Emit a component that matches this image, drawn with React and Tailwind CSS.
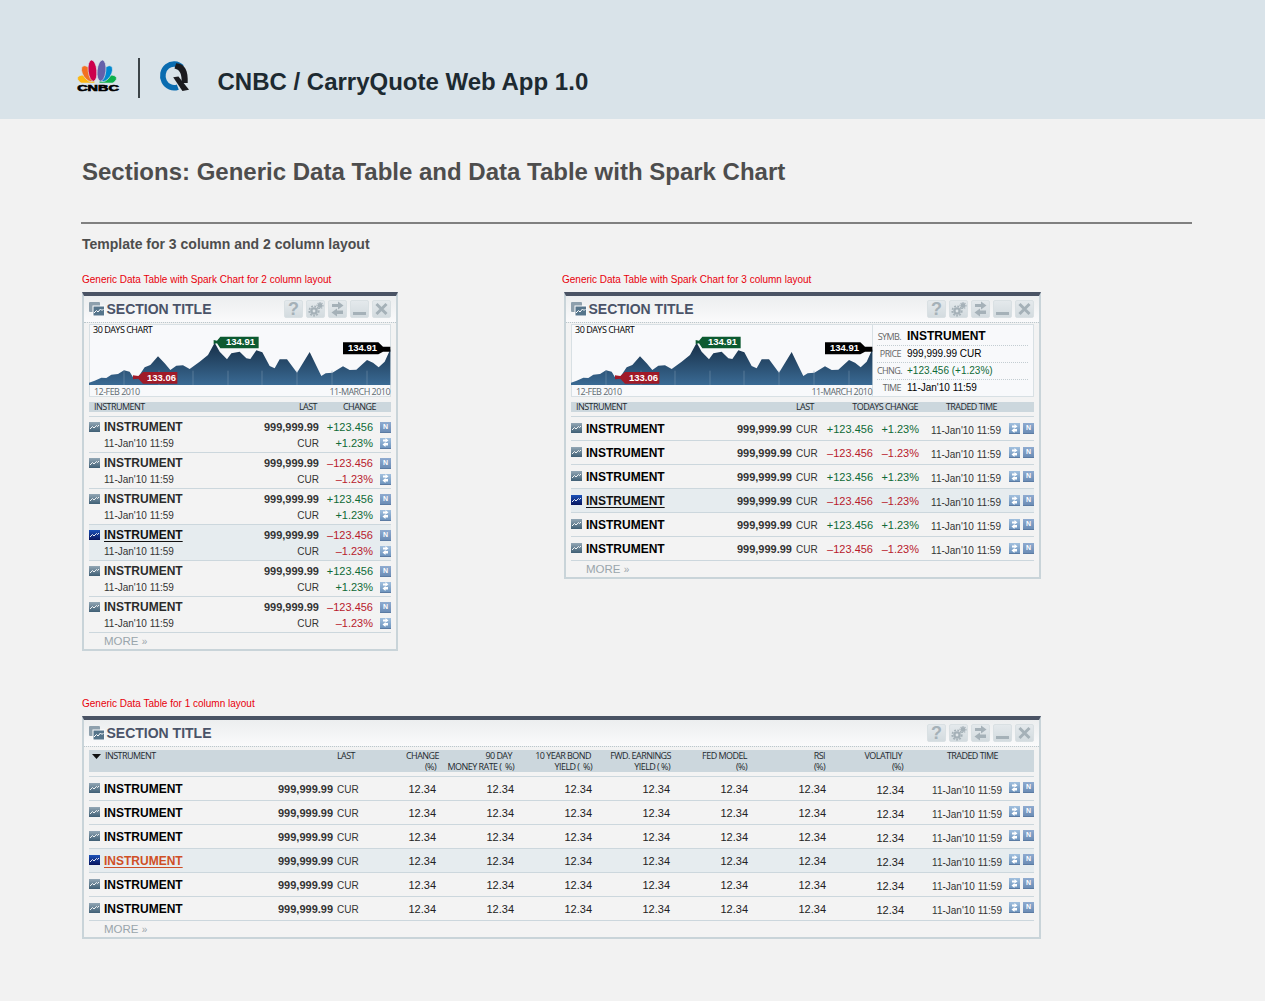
import React from 'react'

const points =
  '28,278 45,272 65,263 80,264 95,254 115,252 133,241 150,245 160,262 175,262 195,232 212,225 235,199 255,220 272,240 290,227 310,226 330,237 360,215 385,195 405,158 420,185 442,208 455,190 480,185 500,205 512,207 530,181 548,187 570,228 585,235 600,208 622,208 652,248 690,186 725,258 738,250 758,248 790,229 810,240 830,239 862,210 880,218 897,232 915,215 932,178'

function PeacockLogo() {
  return (
    <div className="flex flex-col items-center w-[41px] h-[33px]">
      <svg width="41" height="24" viewBox="53 60 122 72">
        <defs>
          <clipPath id="feathers">
            <rect x="50" y="55" width="130" height="73" />
          </clipPath>
        </defs>
        <g clipPath="url(#feathers)" stroke="#d9e3e9" strokeWidth="2">
          <ellipse cx="80" cy="121" rx="14" ry="27" fill="#fcb711" transform="rotate(-72 80 121)" />
          <ellipse cx="145" cy="121" rx="14" ry="27" fill="#0db14b" transform="rotate(72 145 121)" />
          <ellipse cx="85" cy="101" rx="14.5" ry="27" fill="#f37021" transform="rotate(-33 85 101)" />
          <ellipse cx="140" cy="101" rx="14.5" ry="27" fill="#0089d0" transform="rotate(33 140 101)" />
          <ellipse cx="99" cy="92" rx="13" ry="32" fill="#cc004c" transform="rotate(-6 99 92)" />
          <ellipse cx="126" cy="92" rx="13" ry="32" fill="#6460aa" transform="rotate(6 126 92)" />
        </g>
      </svg>
      <span className="text-[9px] leading-[9px] font-bold text-black scale-x-[1.6] [-webkit-text-stroke:0.6px_black]">
        CNBC
      </span>
    </div>
  )
}

function QLogo() {
  return (
    <svg width="33" height="33" viewBox="290 60 100 100">
      <path d="M362 82 A34 36 0 1 0 350 142" fill="none" stroke="#0a6cb0" strokeWidth="17" />
      <path d="M345 70 C372 72 382 92 380 130 L362 130 C362 104 358 90 340 86 Z" fill="#1b1b1f" />
      <path d="M336 112 L352 110 L384 150 L364 154 Z" fill="#1b1b1f" />
    </svg>
  )
}

function SectionIcon() {
  return (
    <svg width="16" height="15" viewBox="0 0 16 15" className="shrink-0">
      <rect x="0" y="0" width="11" height="10" rx="1" fill="#8ea0ad" />
      <rect x="3.5" y="3.5" width="12" height="10.5" fill="#fff" />
      <rect x="4.5" y="4.5" width="10.5" height="9" fill="#56758b" />
      <path d="M5 11 L7.5 8.5 L9 10 L11.5 7 L13 8.5 L14.5 7" fill="none" stroke="#fff" strokeWidth="1" />
    </svg>
  )
}

function HeadButton({ children }) {
  return (
    <div className="w-[19px] h-[18px] rounded-[2px] border border-[#d9e0e3] bg-linear-to-b from-[#e4e9ec] to-[#d3dbdf] flex items-center justify-center text-[#a5b1b8]">
      {children}
    </div>
  )
}

function PanelHead() {
  return (
    <div className="h-[27px] border-b border-dotted border-[#bcc7cc] bg-linear-to-b from-[#eceeef] to-[#fafafb] flex items-center pl-[5px] pr-[5px]">
      <SectionIcon />
      <span className="ml-[1.5px] text-[14px] leading-[18px] font-bold text-[#4a5368]">SECTION TITLE</span>
      <div className="ml-auto flex gap-[3px]">
        <HeadButton>
          <span className="text-[18px] leading-[16px] font-bold">?</span>
        </HeadButton>
        <HeadButton>
          <svg width="17" height="16" viewBox="0 0 17 16" fill="currentColor">
            <circle cx="7" cy="10" r="3.8" />
            <circle cx="7" cy="10" r="4.8" fill="none" stroke="currentColor" strokeWidth="1.6" strokeDasharray="1.8 1.4" />
            <circle cx="7" cy="10" r="1.4" fill="#e0e6e9" />
            <circle cx="13" cy="4.5" r="2.4" />
            <circle cx="13" cy="4.5" r="3" fill="none" stroke="currentColor" strokeWidth="1.1" strokeDasharray="1.2 1" />
          </svg>
        </HeadButton>
        <HeadButton>
          <svg width="17" height="16" viewBox="0 0 17 16" fill="currentColor">
            <path d="M3 3 H9 V0.5 L14.5 4.5 L9 8.5 V6 H3 Z" />
            <path d="M14 9.5 H8 V7.5 L2.5 11.5 L8 15.5 V13 H14 Z" />
          </svg>
        </HeadButton>
        <HeadButton>
          <div className="w-[13px] h-[3px] bg-current mt-[9px]" />
        </HeadButton>
        <HeadButton>
          <svg width="17" height="16" viewBox="0 0 17 16" fill="none" stroke="currentColor" strokeWidth="3">
            <path d="M3.5 3 L13.5 13 M13.5 3 L3.5 13" />
          </svg>
        </HeadButton>
      </div>
    </div>
  )
}

function Chart() {
  return (
    <div className="relative w-[302px] h-[73px] shrink-0 bg-[#f8f9fb] border border-[#d8e0e4]">
      <svg
        width="301"
        height="60"
        viewBox="31 105 903 180"
        className="block overflow-visible"
      >
        <defs>
          <linearGradient id="area" x1="0" y1="0" x2="0" y2="1">
            <stop offset="0" stopColor="#172f47" />
            <stop offset="1" stopColor="#3a6a94" />
          </linearGradient>
        </defs>
        <polygon points={`${points} 932,285 28,285`} fill="url(#area)" />
        {[133, 238, 340, 445, 547, 652, 757, 862].map((x) => (
          <line key={x} x1={x} x2={x} y1="242" y2="285" stroke="#7f9ab2" strokeWidth="1.5" />
        ))}
        <polygon points="190,246 293,246 293,281 190,281 176,266 160,268 160,256 176,258" fill="#a01a28" />
        <polygon points="422,140 537,140 537,175 422,175 412,160 402,162 402,150 412,152" fill="#0c5a30" />
        <polygon points="790,157 896,157 910,170 932,170 932,185 910,185 896,193 790,193" fill="#000" />
      </svg>
      <span className="absolute left-[3px] top-[-1px] text-[9px] leading-[12px] font-['Open_Sans',sans-serif] tracking-[-0.5px] text-black">
        30 DAYS CHART
      </span>
      <span className="absolute left-[136px] top-[11px] text-[9.5px] leading-[12px] font-bold text-white">134.91</span>
      <span className="absolute left-[258px] top-[17px] text-[9.5px] leading-[12px] font-bold text-white">134.91</span>
      <span className="absolute left-[57px] top-[47px] text-[9.5px] leading-[12px] font-bold text-white">133.06</span>
      <div className="flex justify-between pl-[4px] text-[9px] leading-[11px] mt-px font-['Open_Sans',sans-serif] tracking-[-0.55px] text-[#5f6a70]">
        <span>12-FEB 2010</span>
        <span>11-MARCH 2010</span>
      </div>
    </div>
  )
}

function InfoRow({ label, children, dotted = true }) {
  return (
    <div className={`flex items-center h-[17px] ${dotted ? 'border-b border-dotted border-[#c3cdd2]' : ''}`}>
      <span className="w-[24px] shrink-0 text-right whitespace-nowrap text-[9px] font-['Open_Sans',sans-serif] tracking-[-0.6px] text-[#666]">
        {label}
      </span>
      <div className="ml-[6px] text-[10px] leading-[12px] text-black">{children}</div>
    </div>
  )
}

function InfoBox() {
  return (
    <div className="w-[161px] h-[73px] border border-l-0 border-[#d8e0e4] bg-[#f8f9fb] pl-[4px] pr-[5px] pt-[3.5px]">
      <InfoRow label="SYMB.">
        <span className="text-[12px] font-bold">INSTRUMENT</span>
      </InfoRow>
      <InfoRow label="PRICE">999,999.99 CUR</InfoRow>
      <InfoRow label="CHNG.">
        <span className="text-[#0f6a37]">+123.456 (+1.23%)</span>
      </InfoRow>
      <InfoRow label="TIME" dotted={false}>
        11-Jan'10 11:59
      </InfoRow>
    </div>
  )
}

function MiniChart({ active }) {
  return (
    <svg width="11" height="10" viewBox="0 0 11 10" className="shrink-0">
      <defs>
        <linearGradient id="mini" x1="0" y1="0" x2="0" y2="1">
          <stop offset="0" stopColor="#93a7b5" />
          <stop offset="1" stopColor="#3f5f75" />
        </linearGradient>
        <linearGradient id="miniActive" x1="0" y1="0" x2="0" y2="1">
          <stop offset="0" stopColor="#1c52b8" />
          <stop offset="1" stopColor="#08155e" />
        </linearGradient>
      </defs>
      <rect width="11" height="10" fill={active ? 'url(#miniActive)' : 'url(#mini)'} />
      <path d="M1 7 L3.5 4.5 L5 6 L7.5 3.5 L8.5 4.5 L10 3" fill="none" stroke="#fff" strokeWidth="0.9" />
    </svg>
  )
}

function NewsIcon() {
  return (
    <div className="w-[11px] h-[11px] shrink-0 bg-linear-to-b from-[#8fabd0] to-[#6c8db6] border-b border-[#5b7ba3] flex items-center justify-center text-[7px] leading-[8px] font-bold text-white">
      N
    </div>
  )
}

function SwapIcon() {
  return (
    <div className="w-[11px] h-[11px] shrink-0 bg-linear-to-b from-[#a2c0de] to-[#6f95be] border-b border-[#5b7ba3] flex items-center justify-center">
      <svg width="9" height="9" viewBox="0 0 9 9" fill="#fff">
        <path d="M2 1.5 H4.5 V0 L7.5 2.5 L4.5 4.5 V3.5 H2 Z" />
        <path d="M7 5 H4.5 V4 L1.5 6.5 L4.5 9 V7.5 H7 Z" />
      </svg>
    </div>
  )
}

function Name({ active, orange, dark }) {
  let cls = 'ml-[4px] text-[12px] leading-[16px] font-bold '
  if (orange) cls += 'text-[#cf4f26] underline decoration-1 underline-offset-2'
  else if (active) cls += 'text-[#111] underline decoration-1 underline-offset-2'
  else cls += dark ? 'text-black' : 'text-[#2b2b2b]'
  return <span className={cls}>INSTRUMENT</span>
}

function TwoLineRow({ i }) {
  const up = i % 2 === 0
  const active = i === 3
  const color = up ? 'text-[#0f6a37]' : 'text-[#b8192d]'
  return (
    <div className={`h-[36px] border-t border-[#ccd7dd] pt-[2px] text-[11px] ${active ? 'bg-[#e6ecef]' : ''}`}>
      <div className="flex items-center h-[16px]">
        <MiniChart active={active} />
        <Name active={active} />
        <span className="ml-auto font-bold text-[#333]">999,999.99</span>
        <span className={`w-[54px] text-right ${color}`}>{up ? '+123.456' : '–123.456'}</span>
        <div className="ml-[7px]">
          <NewsIcon />
        </div>
      </div>
      <div className="flex items-center h-[16px]">
        <span className="pl-[15px] text-[10px] text-[#333]">11-Jan'10 11:59</span>
        <span className="ml-auto text-[10px] text-[#333]">CUR</span>
        <span className={`w-[54px] text-right ${color}`}>{up ? '+1.23%' : '–1.23%'}</span>
        <div className="ml-[7px]">
          <SwapIcon />
        </div>
      </div>
    </div>
  )
}

function ChangeRow({ i }) {
  const up = i % 2 === 0
  const active = i === 3
  const color = up ? 'text-[#0f6a37]' : 'text-[#b8192d]'
  return (
    <div className={`h-[24px] border-t border-[#ccd7dd] flex items-center text-[11px] ${active ? 'bg-[#e6ecef]' : ''}`}>
      <div className="mb-[2px]">
        <MiniChart active={active} />
      </div>
      <Name active={active} dark />
      <span className="ml-auto pt-[2px] font-bold text-[#333]">999,999.99</span>
      <span className="ml-[4px] pt-[2px] w-[21px] text-[10px] text-[#333]">CUR</span>
      <span className={`w-[56px] pt-[2px] text-right ${color}`}>{up ? '+123.456' : '–123.456'}</span>
      <span className={`w-[46px] pt-[2px] text-right ${color}`}>{up ? '+1.23%' : '–1.23%'}</span>
      <span className="w-[82px] pt-[3px] text-right text-[10px] text-[#333]">11-Jan'10 11:59</span>
      <div className="ml-[8px] flex gap-[3px]">
        <SwapIcon />
        <NewsIcon />
      </div>
    </div>
  )
}

function WideRow({ i }) {
  const active = i === 3
  const cols = [0, 1, 2, 3, 4, 5]
  return (
    <div className={`h-[24px] border-t border-[#ccd7dd] flex items-center text-[11px] ${active ? 'bg-[#e6ecef]' : ''}`}>
      <div className="w-[189px] flex items-center shrink-0">
        <div className="mb-[2px]">
          <MiniChart active={active} />
        </div>
        <Name orange={active} dark />
      </div>
      <span className="w-[55px] pt-[2px] text-right font-bold text-[#333]">999,999.99</span>
      <span className="ml-[4px] pt-[2px] w-[21px] text-[10px] text-[#333]">CUR</span>
      {cols.map((c) => (
        <span key={c} className="w-[78px] pt-[1px] text-right text-[#222]">
          12.34
        </span>
      ))}
      <span className="w-[78px] pt-[3px] text-right text-[#222]">12.34</span>
      <span className="w-[98px] pt-[3px] text-right text-[10px] text-[#333]">11-Jan'10 11:59</span>
      <div className="ml-[7px] mb-[2px] flex gap-[3px]">
        <SwapIcon />
        <NewsIcon />
      </div>
    </div>
  )
}

function More() {
  return (
    <div className="h-[16px] border-t border-[#ccd7dd] box-content pl-[15px] text-[11.5px] leading-[16px] text-[#9aa5ab]">
      MORE <span className="text-[10px]">»</span>
    </div>
  )
}

function RedLabel({ children }) {
  return <p className="text-[10px] leading-[14px] text-[#e8000b]">{children}</p>
}

const thin = "font-['Open_Sans',sans-serif] text-[9px] tracking-[-0.55px] text-[#1f2a30]"

function WideHeader() {
  const heads = [
    ['w-[84px]', 'CHANGE', '(%)', '', 'pr-[3px]'],
    ['w-[78px]', '90 DAY', 'MONEY RATE (  %)', 'pr-[5px]', 'pr-[3px]'],
    ['w-[78px]', '10 YEAR BOND', 'YIELD (  %)', 'pr-[4px]', 'pr-[3px]'],
    ['w-[78px]', 'FWD. EARNINGS', 'YIELD ( %)', 'pr-[2px]', 'pr-[3px]'],
    ['w-[78px]', 'FED MODEL', '(%)', 'pr-[4px]', 'pr-[4px]'],
    ['w-[78px]', 'RSI', '(%)', 'pr-[4px]', 'pr-[4px]'],
    ['w-[78px]', 'VOLATILIY', '(%)', 'pr-[5px]', 'pr-[4px]'],
  ]
  return (
    <div className={`mt-[3px] h-[22px] bg-[#ccd7dd] flex leading-[11px] ${thin}`}>
      <span className="w-[16px] shrink-0 pl-[3px] pt-[4px]">
        <svg width="9" height="5" viewBox="0 0 9 5" className="block">
          <path d="M0 0 H9 L4.5 5 Z" fill="#111" />
        </svg>
      </span>
      <div className="w-[250px] flex justify-between">
        <span>INSTRUMENT</span>
        <span>LAST</span>
      </div>
      {heads.map(([w, a, b, padA, padB]) => (
        <div key={a} className={`${w} text-right whitespace-pre`}>
          <div className={padA}>{a}</div>
          <div className={padB}>{b}</div>
        </div>
      ))}
      <span className="w-[91px] text-right">TRADED TIME</span>
    </div>
  )
}

function ChartPanel2() {
  return (
    <div className="ml-[166px] w-[477px] border-x-2 border-b-2 border-t-4 border-x-[#c9d4d9] border-b-[#c9d4d9] border-t-[#4a5364] bg-[#f3f3f3]">
      <PanelHead />
      <div className="px-[5px]">
        <div className="mt-px flex">
          <Chart />
          <InfoBox />
        </div>
        <div className={`mt-[5px] mb-[4px] h-[10px] bg-[#ccd7dd] flex items-center pl-[5px] leading-[10px] ${thin}`}>
          <span>INSTRUMENT</span>
          <span className="ml-auto">LAST</span>
          <span className="w-[104px] text-right">TODAYS CHANGE</span>
          <span className="w-[79px] mr-[37px] text-right">TRADED TIME</span>
        </div>
        {[0, 1, 2, 3, 4, 5].map((i) => (
          <ChangeRow key={i} i={i} />
        ))}
        <More />
      </div>
    </div>
  )
}

export default function App() {
  return (
    <div className="min-h-[1001px] bg-[#f2f2f2] font-['Liberation_Sans',Arial,sans-serif]">
      <div className="h-[119px] bg-[#d9e3e9] flex items-center pl-[77px] pt-[34px]">
        <PeacockLogo />
        <div className="ml-[20px] mt-[3px] w-[1.5px] h-[40px] bg-[#3c4448]" />
        <div className="ml-[18px]">
          <QLogo />
        </div>
        <h1 className="ml-[27px] mt-[11px] text-[24px] leading-[28px] font-bold text-[#1d2a31]">
          CNBC / CarryQuote Web App 1.0
        </h1>
      </div>

      <div className="pl-[82px] pb-[62px]">
        <h2 className="mt-[39px] text-[24px] leading-[28px] font-bold text-[#4d4d4d]">
          Sections: Generic Data Table and Data Table with Spark Chart
        </h2>
        <div className="mt-[36px] -ml-px mr-[73px] h-[2px] bg-[#808080]" />
        <h3 className="mt-[11px] text-[14px] leading-[18px] font-bold text-[#4d4d4d]">
          Template for 3 column and 2 column layout
        </h3>

        <div className="mt-[20px] flex">
          <div className="w-[480px]">
            <RedLabel>Generic Data Table with Spark Chart for 2 column layout</RedLabel>
          </div>
          <RedLabel>Generic Data Table with Spark Chart for 3 column layout</RedLabel>
        </div>

        <div className="mt-[5px] flex items-start">
          <div className="w-[316px] border-x-2 border-b-2 border-t-4 border-x-[#c9d4d9] border-b-[#c9d4d9] border-t-[#4a5364] bg-[#f3f3f3]">
            <PanelHead />
            <div className="px-[5px]">
              <div className="mt-px">
                <Chart />
              </div>
              <div className={`mt-[5px] mb-[4px] h-[10px] bg-[#ccd7dd] flex items-center pl-[5px] leading-[10px] ${thin}`}>
                <span>INSTRUMENT</span>
                <span className="ml-auto">LAST</span>
                <span className="w-[59px] mr-[15px] text-right">CHANGE</span>
              </div>
              {[0, 1, 2, 3, 4, 5].map((i) => (
                <TwoLineRow key={i} i={i} />
              ))}
              <More />
            </div>
          </div>
          <ChartPanel2 />
        </div>

        <div className="mt-[46px]">
          <RedLabel>Generic Data Table for 1 column layout</RedLabel>
        </div>
        <div className="mt-[5px] w-[959px] border-x-2 border-b-2 border-t-4 border-x-[#c9d4d9] border-b-[#c9d4d9] border-t-[#4a5364] bg-[#f3f3f3]">
          <PanelHead />
          <div className="px-[5px]">
            <div className="mb-[4px]">
              <WideHeader />
            </div>
            {[0, 1, 2, 3, 4, 5].map((i) => (
              <WideRow key={i} i={i} />
            ))}
            <More />
          </div>
        </div>
      </div>
    </div>
  )
}
